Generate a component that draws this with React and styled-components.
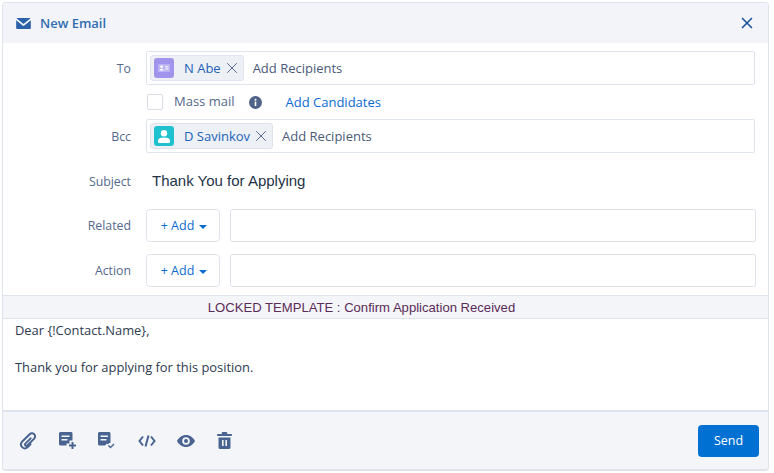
import React from "react";
import styled, { createGlobalStyle } from "styled-components";
import { X } from "lucide-react";

const Global = createGlobalStyle`
  html, body { margin: 0; padding: 0; background: #fff; }
  body { font-family: "Open Sans", "Liberation Sans", sans-serif; }
`;

const Panel = styled.div`
  box-sizing: border-box;
  width: 767px;
  height: 469px;
  margin: 2px 0 0 2px;
  border: 1px solid #dfe3ee;
  border-bottom-width: 2px;
  border-radius: 4px;
  display: flex;
  flex-direction: column;
  overflow: hidden;
`;

const Header = styled.div`
  height: 40px;
  flex: none;
  background: #f2f4f9;
  display: flex;
  align-items: center;
  padding: 0 12px 0 13px;
  gap: 9px;
`;

const Title = styled.div`
  flex: 1;
  font-size: 13px;
  font-weight: 600;
  color: #2f6db0;
`;

const CloseBtn = styled.button`
  border: 0;
  background: none;
  padding: 0;
  display: flex;
  color: #1f56a0;
`;

const Form = styled.div`
  flex: none;
  height: 252px;
  box-sizing: border-box;
  padding: 8px 13px 0 0;
  display: flex;
  flex-direction: column;
`;

const Row = styled.div`
  display: grid;
  grid-template-columns: 128px 1fr;
  column-gap: 15px;
  align-items: center;
  height: ${(p) => p.$h}px;
  margin-top: ${(p) => p.$mt || 0}px;
`;

const Label = styled.div`
  font-size: 12.3px;
  color: #54698d;
  text-align: right;
`;

const Field = styled.div`
  box-sizing: border-box;
  height: 34px;
  border: 1px solid #dfe3ee;
  border-radius: 2px;
  display: flex;
  align-items: center;
  padding-left: 3px;
  gap: 9px;
  font-size: 13px;
  color: #4a5a78;
`;

const Pill = styled.div`
  box-sizing: border-box;
  height: 26px;
  background: #edf0f5;
  border: 1px solid #dfe3ee;
  border-radius: 3px;
  display: flex;
  align-items: center;
  padding: 0 2px 0 3px;
  font-size: 13px;
  color: #1b62b8;
`;

const Avatar = styled.div`
  width: 20px;
  height: 20px;
  border-radius: 3px;
  background: ${(p) => p.$bg};
  margin-right: 10px;
  display: flex;
  align-items: center;
  justify-content: center;
`;

const PillX = styled.span`
  display: flex;
  margin-left: 2px;
  margin-top: -1px;
  color: #54698d;
`;

const MassRow = styled.div`
  display: flex;
  align-items: center;
  font-size: 13px;
  color: #54698d;
`;

const MassLabel = styled.span`
  margin-top: -3px;
`;

const Check = styled.div`
  box-sizing: border-box;
  width: 16px;
  height: 16px;
  border: 1px solid #d8dde6;
  border-radius: 2px;
  margin: -1px 11px 0 1px;
`;

const InfoIcon = styled.span`
  display: flex;
  margin: 0 24px 0 14px;
`;

const LinkText = styled.a`
  font-size: 13px;
  color: #0b6ad2;
`;

const SubjectText = styled.div`
  font-family: "Liberation Sans", Arial, sans-serif;
  font-size: 15px;
  color: #243347;
  padding: 0 0 2px 6px;
`;

const PickRow = styled.div`
  display: flex;
  gap: 10px;
  align-items: center;
  margin-right: -1px;
`;

const AddBtn = styled.button`
  box-sizing: border-box;
  width: 74px;
  height: 33px;
  flex: none;
  background: #fff;
  border: 1px solid #dfe3ee;
  border-radius: 4px;
  font: inherit;
  font-size: 12.5px;
  color: #0b6ad2;
  display: flex;
  align-items: center;
  justify-content: center;
  gap: 5px;
  padding: 0 0 0 2px;
`;

const Caret = styled.span`
  width: 0;
  height: 0;
  border-left: 4px solid transparent;
  border-right: 4px solid transparent;
  border-top: 4px solid #0b6ad2;
  margin-top: 2px;
`;

const Blank = styled.div`
  flex: 1;
  height: 33px;
  box-sizing: border-box;
  border: 1px solid #dfe3ee;
  border-radius: 2px;
`;

const Locked = styled.div`
  flex: none;
  height: 24px;
  box-sizing: border-box;
  padding-right: 48px;
  background: #f3f5f9;
  border-top: 1px solid #dfe3ee;
  border-bottom: 1px solid #dfe3ee;
  display: flex;
  align-items: center;
  justify-content: center;
  font-family: "Liberation Sans", Arial, sans-serif;
  font-size: 13.1px;
  color: #5c2b58;
`;

const Editor = styled.div`
  flex: none;
  height: 91px;
  box-sizing: border-box;
  padding: 3px 12px;
  font-size: 12.9px;
  line-height: 17px;
  color: #2d3a4f;
`;

const Line = styled.div`
  margin-bottom: 20px;
`;

const Footer = styled.div`
  flex: 1;
  background: #f3f5f9;
  border-top: 2px solid #dfe3ee;
  display: flex;
  align-items: center;
  padding: 0 9px 0 16px;
`;

const Tools = styled.div`
  flex: 1;
  display: flex;
  align-items: center;
  gap: 21.500px;
  color: #4a6491;
`;

const SendBtn = styled.button`
  width: 61px;
  height: 32px;
  border: 0;
  border-radius: 4px;
  background: #0070d2;
  color: #fff;
  font: inherit;
  font-size: 12.5px;
  font-weight: 500;
`;

const MailIcon = () => (
  <svg width="15" height="11" viewBox="0 0 16 12" fill="#2a62a8">
    <path d="M1 0h14c.4 0 .6.3.4.6L8.3 6.400c-.2.2-.4.2-.6 0L.6.6C.4.3.6 0 1 0z" />
    <path d="M0 2.400l7.100 5.700c.5.4 1.300.4 1.800 0L16 2.400V11c0 .6-.4 1-1 1H1c-.6 0-1-.4-1-1z" />
  </svg>
);

const ContactIcon = () => (
  <svg width="12" height="8" viewBox="0 0 12 8" fill="#fff">
    <rect width="12" height="8" rx="1" fillOpacity="0.3" />
    <circle cx="3.600" cy="2.800" r="1.400" />
    <path d="M1.400 6.500c0-1 1-1.600 2.200-1.600s2.200.6 2.200 1.600z" />
    <path d="M7.200 2.200h3.200v1H7.200zM7.200 4.600h3.200v1H7.200z" />
  </svg>
);

const PersonIcon = () => (
  <svg width="14" height="14" viewBox="0 0 14 14" fill="#fff">
    <circle cx="7" cy="4.200" r="3.200" />
    <path d="M1 11.500c0-2 2.200-3 6-3s6 1 6 3V13c0 .5-.4 1-1 1H2c-.6 0-1-.5-1-1z" />
  </svg>
);

const InfoGlyph = () => (
  <svg width="13" height="13" viewBox="0 0 13 13">
    <circle cx="6.500" cy="6.500" r="6.500" fill="#4f6287" />
    <rect x="5.700" y="5.500" width="1.600" height="4.500" fill="#fff" />
    <circle cx="6.500" cy="3.700" r="1" fill="#fff" />
  </svg>
);

const ClipIcon = () => (
  <svg width="18" height="18" viewBox="0 0 18 18" fill="none" stroke="currentColor" strokeWidth="2" strokeLinecap="round">
    <path d="M11.600 6.400L6.400 11.600a1.300 1.300 0 0 0 1.900 1.900l6.900-6.900a3.100 3.100 0 0 0-4.500-4.400L3 9.800a3.900 3.900 0 0 0 5.500 5.500l3-3" />
  </svg>
);

const NoteAddIcon = () => (
  <svg width="18" height="18" viewBox="0 0 18 18" fill="currentColor">
    <path d="M1.500 0h10.500C12.800 0 13.500 .7 13.500 1.500V8.500h-3v3H7.500v2H1.500C.7 13.500 0 12.800 0 12v-10.500C0 .7.7 0 1.500 0z" />
    <path d="M2.500 3.500h8v1.500h-8zM2.500 7h6v1.500h-6z" fill="#f3f5f9" />
    <path d="M12.500 10h2v2.500H17v2h-2.500V17h-2v-2.500H10v-2h2.500z" />
  </svg>
);

const NoteCheckIcon = () => (
  <svg width="18" height="18" viewBox="0 0 18 18" fill="currentColor">
    <path d="M1.500 0h9.500c.8 0 1.500.7 1.500 1.500V11h-1.500l-1 1.500-1-1-2 2H1.500C.7 13.500 0 12.800 0 12V1.500C0 .7.7 0 1.500 0z" />
    <path d="M2.500 3.500h7.500V5H2.500zM2.500 7h6v1.500h-6z" fill="#f3f5f9" />
    <path d="M10 14l1-1 1.500 1.500 3-3 1 1-4 4z" />
  </svg>
);

const CodeIcon = () => (
  <svg width="18" height="14" viewBox="0 0 18 14" fill="none" stroke="currentColor" strokeWidth="2">
    <path d="M5 2.500L1.500 7 5 11.500M13 2.500L16.500 7 13 11.500M10.500 1.500L7.500 12.500" />
  </svg>
);

const EyeIcon = () => (
  <svg width="18" height="12" viewBox="0 0 18 12" fill="currentColor">
    <path fillRule="evenodd" d="M9 0c4 0 7.400 2.700 9 6-1.600 3.300-5 6-9 6S1.600 9.300 0 6c1.600-3.300 5-6 9-6zm0 2.200a3.800 3.800 0 1 0 0 7.600 3.800 3.800 0 0 0 0-7.600zM9 4a2 2 0 1 1 0 4 2 2 0 0 1 0-4z" />
  </svg>
);

const TrashIcon = () => (
  <svg width="15" height="17" viewBox="0 0 15 17" fill="currentColor">
    <path fillRule="evenodd" d="M5.500 0h4c.4 0 .7.300.7.700V2H14.300c.4 0 .7.300.7.700v.6c0 .4-.3.700-.7.700H.7C.3 4 0 3.700 0 3.300v-.6C0 2.300.3 2 .7 2h4.100V.7c0-.4.300-.7.700-.7zM1.500 5.500h12v10c0 .8-.7 1.500-1.500 1.500H3c-.8 0-1.500-.7-1.500-1.500zM5 8v6h1.600V8zm3.400 0v6H10V8z" />
  </svg>
);

const Recipient = ({ name, bg, icon }) => (
  <Pill>
    <Avatar $bg={bg}>{icon}</Avatar>
    {name}
    <PillX><X size={18} strokeWidth={1.300} /></PillX>
  </Pill>
);

const Picker = () => (
  <PickRow>
    <AddBtn>+ Add <Caret /></AddBtn>
    <Blank />
  </PickRow>
);

export default function App() {
  return (
    <>
      <Global />
      <Panel>
        <Header>
          <MailIcon />
          <Title>New Email</Title>
          <CloseBtn><X size={18} strokeWidth={2.200} /></CloseBtn>
        </Header>
        <Form>
          <Row $h={34}>
            <Label>To</Label>
            <Field>
              <Recipient name="N Abe" bg="#a094ed" icon={<ContactIcon />} />
              Add Recipients
            </Field>
          </Row>
          <Row $h={34}>
            <div />
            <MassRow>
              <Check />
              <MassLabel>Mass mail</MassLabel>
              <InfoIcon><InfoGlyph /></InfoIcon>
              <LinkText>Add Candidates</LinkText>
            </MassRow>
          </Row>
          <Row $h={34}>
            <Label>Bcc</Label>
            <Field>
              <Recipient name="D Savinkov" bg="#1fc1cf" icon={<PersonIcon />} />
              Add Recipients
            </Field>
          </Row>
          <Row $h={56}>
            <Label>Subject</Label>
            <SubjectText>Thank You for Applying</SubjectText>
          </Row>
          <Row $h={33}>
            <Label>Related</Label>
            <Picker />
          </Row>
          <Row $h={33} $mt={12}>
            <Label>Action</Label>
            <Picker />
          </Row>
        </Form>
        <Locked>LOCKED TEMPLATE : Confirm Application Received</Locked>
        <Editor>
          <Line>Dear {"{!Contact.Name}"},</Line>
          <Line>Thank you for applying for this position.</Line>
        </Editor>
        <Footer>
          <Tools>
            <ClipIcon />
            <NoteAddIcon />
            <NoteCheckIcon />
            <CodeIcon />
            <EyeIcon />
            <TrashIcon />
          </Tools>
          <SendBtn>Send</SendBtn>
        </Footer>
      </Panel>
    </>
  );
}
